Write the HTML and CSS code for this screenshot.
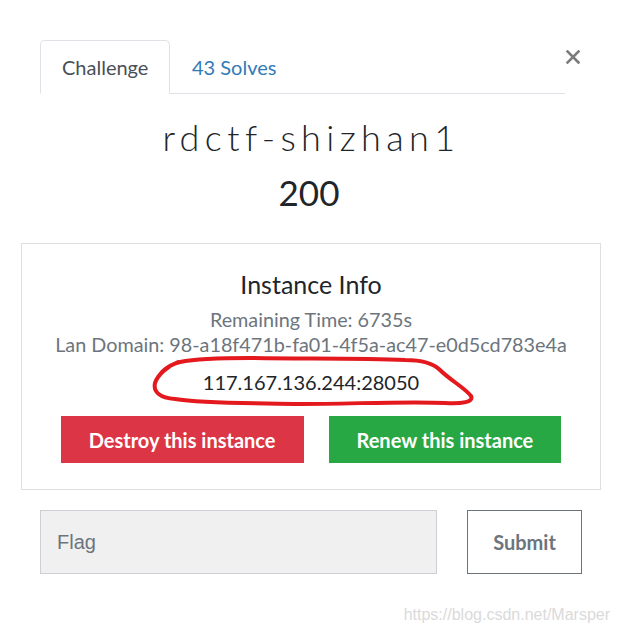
FILE: index.html
```html
<!DOCTYPE html>
<html lang="en">
<head>
<meta charset="utf-8">
<title>rdctf-shizhan1</title>
<link rel="stylesheet" href="styles.css">
</head>
<body>
<div class="modal">
  <div class="header">
    <ul class="tabs">
      <li class="tab active">Challenge</li>
      <li class="tab link">43 Solves</li>
    </ul>
    <button class="close" aria-label="Close">
      <svg width="14" height="14" viewBox="0 0 14 14"><path d="M1.5 1.5 L12.5 12.5 M12.5 1.5 L1.5 12.5" stroke="#7b7b7b" stroke-width="2.6" stroke-linecap="square" fill="none"/></svg>
    </button>
  </div>
  <h2 class="title">rdctf-shizhan1</h2>
  <h3 class="value">200</h3>
  <div class="instance">
    <h4 class="instance-title">Instance Info</h4>
    <p class="meta">Remaining Time: 6735s</p>
    <p class="meta">Lan Domain: 98-a18f471b-fa01-4f5a-ac47-e0d5cd783e4a</p>
    <p class="address">117.167.136.244:28050</p>
    <div class="actions">
      <button class="btn btn-danger">Destroy this instance</button>
      <button class="btn btn-success">Renew this instance</button>
    </div>
    <svg class="scribble" viewBox="22 244 578 246" preserveAspectRatio="none">
      <path d="M178 362 C 168 366 158 374 155 383 C 153 392 160 398 175 399 C 205 404 260 403 300 404 C 350 404 410 401 445 403 C 462 404 474 402 471 396 C 465 388 450 380 440 370 C 432 362 420 360 405 360 C 360 358 300 359 250 358 C 220 358 195 359 180 362 C 172 364 166 368 162 372" fill="none" stroke="#e3191e" stroke-width="4" stroke-linecap="round" stroke-linejoin="round"/>
    </svg>
  </div>
  <form class="flag-row">
    <input class="flag-input" type="text" placeholder="Flag">
    <button class="submit" type="button">Submit</button>
  </form>
  <div class="watermark">https://blog.csdn.net/Marsper</div>
</div>
</body>
</html>
```
FILE: styles.css
```css
* { box-sizing: border-box; }
html, body { margin: 0; padding: 0; background: #fff; }
body {
  font-family: Lato, "Open Sans", "Liberation Sans", sans-serif;
  color: #212529;
  width: 618px;
  height: 636px;
  overflow: hidden;
}
.modal { width: 618px; }

.header {
  display: flex;
  align-items: flex-start;
  padding: 40px 0 0 40px;
}
.tabs {
  list-style: none;
  margin: 0;
  padding: 0;
  width: 525px;
  display: flex;
  border-bottom: 1px solid #dee2e6;
}
.tab {
  font-size: 20px;
  line-height: 26px;
  padding: 13px 20px 13px 21px;
  border: 1px solid transparent;
  border-top-left-radius: 5px;
  border-top-right-radius: 5px;
  margin-bottom: -1px;
  white-space: nowrap;
}
.tab.active {
  width: 130px;
  color: #495057;
  background: #fff;
  border-color: #dee2e6 #dee2e6 #fff;
}
.tab.link { color: #337ab7; }
.close {
  border: 0;
  background: none;
  padding: 0;
  margin: 10px 0 0 1px;
  width: 14px;
  height: 14px;
  display: block;
}
.close svg { display: block; }

.title {
  margin: 22px 0 0;
  padding-left: 5px;
  text-align: center;
  font-size: 36px;
  line-height: 1.2;
  font-weight: 300;
  letter-spacing: 5.4px;
}
.value {
  margin: 13px 0 0;
  text-align: center;
  font-size: 35px;
  line-height: 40px;
  font-weight: 400;
}

.instance {
  position: relative;
  margin: 31px 17px 0 21px;
  border: 1px solid #dfdfdf;
  padding: 26px 0 26px;
  text-align: center;
}
.instance-title {
  margin: 0;
  font-size: 25px;
  line-height: 29px;
  font-weight: 400;
}
.meta {
  margin: 0;
  font-size: 19.8px;
  line-height: 25px;
  color: #6c757d;
}
.instance-title + .meta { margin-top: 8px; }
.address {
  margin: 13px 0 0;
  font-size: 20px;
  line-height: 25px;
  color: #212529;
}
.actions {
  display: flex;
  justify-content: center;
  gap: 25px;
  margin-top: 21px;
}
.btn {
  font-family: Lato, "Liberation Sans", sans-serif;
  font-weight: 700;
  font-size: 20px;
  color: #fff;
  border: 0;
  border-radius: 0;
  height: 47px;
  padding: 0 28px;
}
.btn-danger { background: #dc3545; }
.btn-success { background: #28a745; }
.scribble {
  position: absolute;
  left: 0;
  top: 0;
  width: 578px;
  height: 246px;
  pointer-events: none;
  overflow: visible;
}

.flag-row {
  display: flex;
  gap: 30px;
  margin: 20px 0 0 40px;
}
.flag-input {
  width: 397px;
  height: 64px;
  background: #f0f0f0;
  border: 1px solid #ccd0d4;
  border-radius: 0;
  padding: 0 16px;
  font-family: "Liberation Sans", Arial, sans-serif;
  font-size: 20px;
  color: #495057;
  outline: none;
}
.flag-input::placeholder { color: #6c757d; }
.submit {
  width: 115px;
  height: 64px;
  background: #fff;
  border: 1px solid #6c757d;
  border-radius: 0;
  font-family: Lato, "Liberation Sans", sans-serif;
  font-weight: 700;
  font-size: 20px;
  color: #6c757d;
  padding: 0;
}

.watermark {
  text-align: right;
  padding-right: 8px;
  margin-top: 32px;
  font-family: "Liberation Sans", Arial, sans-serif;
  font-size: 16px;
  color: #dadada;
}
```
